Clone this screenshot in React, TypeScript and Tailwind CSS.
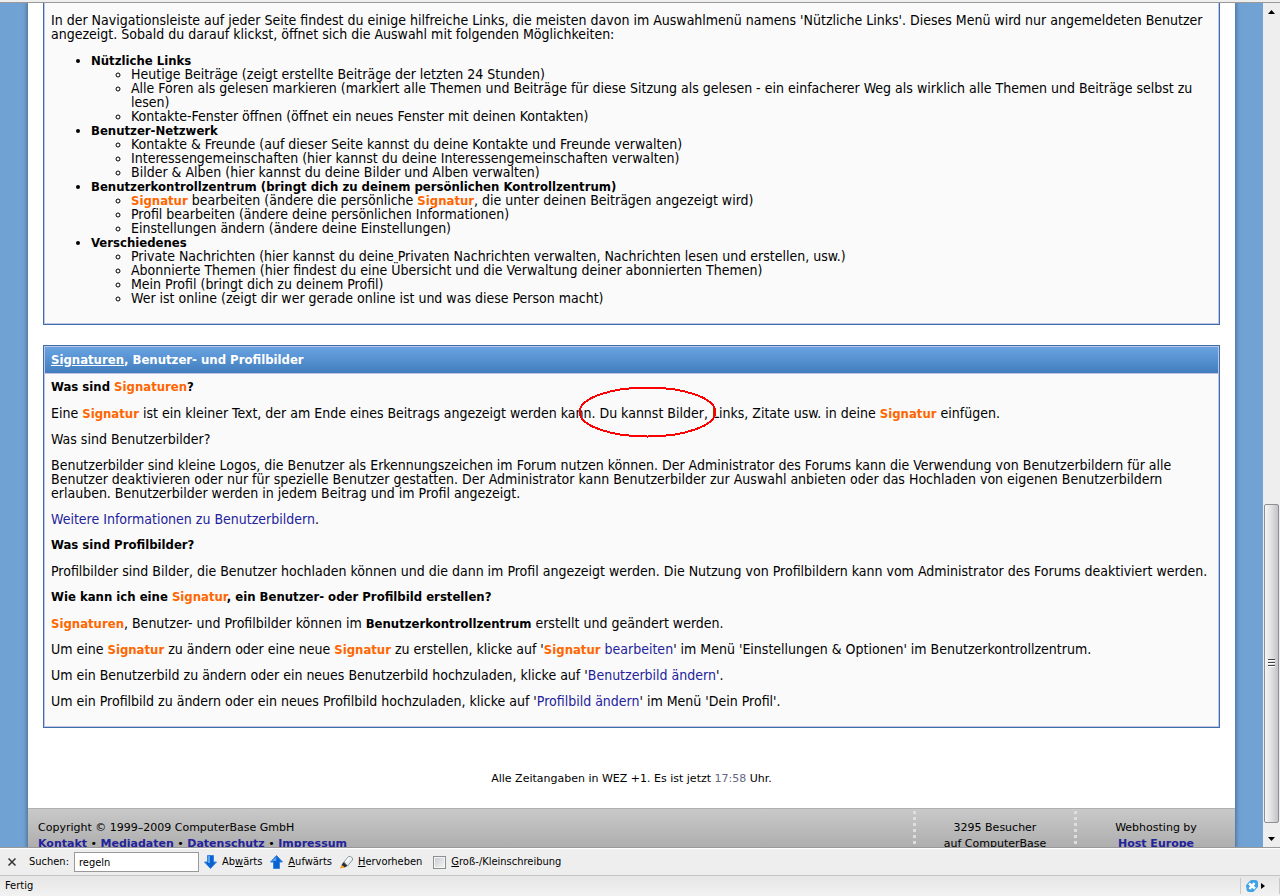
import React from 'react';

type Entry = { title: string; items: React.ReactNode[] };

const Strong = ({ children }: { children: React.ReactNode }) => (
  <strong className="text-[13px] leading-none">{children}</strong>
);

const Hit = ({ children }: { children: React.ReactNode }) => (
  <span className="text-[13px] leading-none font-bold text-[#ff6600]">{children}</span>
);

const Key = ({ children }: { children: React.ReactNode }) => <span className="underline">{children}</span>;

const Link = ({ children }: { children: React.ReactNode }) => (
  <a href="#" className="text-[#22229c]">
    {children}
  </a>
);

const navigation: Entry[] = [
  {
    title: 'Nützliche Links',
    items: [
      'Heutige Beiträge (zeigt erstellte Beiträge der letzten 24 Stunden)',
      'Alle Foren als gelesen markieren (markiert alle Themen und Beiträge für diese Sitzung als gelesen - ein einfacherer Weg als wirklich alle Themen und Beiträge selbst zu lesen)',
      'Kontakte-Fenster öffnen (öffnet ein neues Fenster mit deinen Kontakten)',
    ],
  },
  {
    title: 'Benutzer-Netzwerk',
    items: [
      'Kontakte & Freunde (auf dieser Seite kannst du deine Kontakte und Freunde verwalten)',
      'Interessengemeinschaften (hier kannst du deine Interessengemeinschaften verwalten)',
      'Bilder & Alben (hier kannst du deine Bilder und Alben verwalten)',
    ],
  },
  {
    title: 'Benutzerkontrollzentrum (bringt dich zu deinem persönlichen Kontrollzentrum)',
    items: [
      <>
        <Hit>Signatur</Hit> bearbeiten (ändere die persönliche <Hit>Signatur</Hit>, die unter deinen Beiträgen angezeigt
        wird)
      </>,
      'Profil bearbeiten (ändere deine persönlichen Informationen)',
      'Einstellungen ändern (ändere deine Einstellungen)',
    ],
  },
  {
    title: 'Verschiedenes',
    items: [
      'Private Nachrichten (hier kannst du deine Privaten Nachrichten verwalten, Nachrichten lesen und erstellen, usw.)',
      'Abonnierte Themen (hier findest du eine Übersicht und die Verwaltung deiner abonnierten Themen)',
      'Mein Profil (bringt dich zu deinem Profil)',
      'Wer ist online (zeigt dir wer gerade online ist und was diese Person macht)',
    ],
  },
];

function NavigationPanel() {
  return (
    <section className="border border-t-0 border-[#3b6eab]">
      <div className="flex flex-col gap-3 border border-t-0 border-[#c3c3e3] bg-[#fafafa] px-1.5 pt-2.5 pb-[18px]">
        <p>
          In der Navigationsleiste auf jeder Seite findest du einige hilfreiche Links, die meisten davon im Auswahlmenü
          namens 'Nützliche Links'. Dieses Menü wird nur angemeldeten Benutzer angezeigt. Sobald du darauf klickst,
          öffnet sich die Auswahl mit folgenden Möglichkeiten:
        </p>
        <ul className="list-disc pl-10">
          {navigation.map((entry) => (
            <li key={entry.title}>
              <Strong>{entry.title}</Strong>
              <ul className="list-[circle] pl-10">
                {entry.items.map((item, i) => (
                  <li key={i}>{item}</li>
                ))}
              </ul>
            </li>
          ))}
        </ul>
      </div>
    </section>
  );
}

function SignaturePanel() {
  return (
    <section className="mt-5 border border-[#3b6eab]">
      <div className="border border-[#c3c3e3] bg-[#fafafa]">
        <h2 className="border-b border-[#c3c3e3] bg-linear-to-b from-[#69a3e2] to-[#417dbd] px-1.5 py-1.5 text-[13px] font-bold text-white">
          <a href="#" className="underline">
            Signaturen
          </a>
          , Benutzer- und Profilbilder
        </h2>
        <div className="flex flex-col gap-3 px-1.5 pt-1.5 pb-[18px]">
          <p className="text-[13px] font-bold">
            Was sind <Hit>Signaturen</Hit>?
          </p>
          <p className="relative">
            Eine <Hit>Signatur</Hit> ist ein kleiner Text, der am Ende eines Beitrags angezeigt werden kann. Du kannst
            Bilder, Links, Zitate usw. in deine <Hit>Signatur</Hit> einfügen.
            <svg
              className="absolute -top-5 left-[527px] h-[52px] w-[139px]"
              viewBox="0 0 139 52"
              fill="none"
              shapeRendering="crispEdges"
            >
              <ellipse cx="69.5" cy="26" rx="68" ry="24.5" stroke="#f00" strokeWidth="2" />
            </svg>
          </p>
          <p>Was sind Benutzerbilder?</p>
          <p>
            Benutzerbilder sind kleine Logos, die Benutzer als Erkennungszeichen im Forum nutzen können. Der
            Administrator des Forums kann die Verwendung von Benutzerbildern für alle Benutzer deaktivieren oder nur für
            spezielle Benutzer gestatten. Der Administrator kann Benutzerbilder zur Auswahl anbieten oder das Hochladen
            von eigenen Benutzerbildern erlauben. Benutzerbilder werden in jedem Beitrag und im Profil angezeigt.
          </p>
          <p>
            <Link>Weitere Informationen zu Benutzerbildern</Link>.
          </p>
          <p className="text-[13px] font-bold">Was sind Profilbilder?</p>
          <p>
            Profilbilder sind Bilder, die Benutzer hochladen können und die dann im Profil angezeigt werden. Die Nutzung
            von Profilbildern kann vom Administrator des Forums deaktiviert werden.
          </p>
          <p className="text-[13px] font-bold">
            Wie kann ich eine <Hit>Signatur</Hit>, ein Benutzer- oder Profilbild erstellen?
          </p>
          <p>
            <Hit>Signaturen</Hit>, Benutzer- und Profilbilder können im <Strong>Benutzerkontrollzentrum</Strong> erstellt
            und geändert werden.
          </p>
          <p>
            Um eine <Hit>Signatur</Hit> zu ändern oder eine neue <Hit>Signatur</Hit> zu erstellen, klicke auf '
            <Link>
              <Hit>Signatur</Hit> bearbeiten
            </Link>
            ' im Menü 'Einstellungen & Optionen' im Benutzerkontrollzentrum.
          </p>
          <p>
            Um ein Benutzerbild zu ändern oder ein neues Benutzerbild hochzuladen, klicke auf '
            <Link>Benutzerbild ändern</Link>'.
          </p>
          <p>
            Um ein Profilbild zu ändern oder ein neues Profilbild hochzuladen, klicke auf '<Link>Profilbild ändern</Link>
            ' im Menü 'Dein Profil'.
          </p>
        </div>
      </div>
    </section>
  );
}

const Dots = () => (
  <div className="mt-0.5 h-[34px] w-[3px] shrink-0 bg-[repeating-linear-gradient(to_bottom,#dedede_0px,#dedede_3px,transparent_3px,transparent_6px)]" />
);

const footerLinks = ['Kontakt', 'Mediadaten', 'Datenschutz', 'Impressum'];

function Footer() {
  return (
    <footer className="flex h-20 border-t border-[#b0b0b0] bg-linear-to-b from-[#c9c9c9] to-[#929292] font-['DejaVu_Sans',Verdana,sans-serif] text-[11px] leading-4">
      <div className="grow pt-[11px] pl-2.5">
        Copyright © 1999–2009 ComputerBase GmbH
        <br />
        {footerLinks.map((label, i) => (
          <React.Fragment key={label}>
            {i > 0 && ' • '}
            <a href="#" className="font-bold text-[#22229c]">
              {label}
            </a>
          </React.Fragment>
        ))}
      </div>
      <Dots />
      <div className="w-[158px] pt-[11px] text-center">
        3295 Besucher
        <br />
        auf ComputerBase
      </div>
      <Dots />
      <div className="w-[158px] pt-[11px] text-center">
        Webhosting by
        <br />
        <a href="#" className="font-bold text-[#22229c]">
          Host Europe
        </a>
      </div>
    </footer>
  );
}

function Scrollbar() {
  return (
    <div className="flex w-[17px] shrink-0 flex-col items-center bg-[#eeeeee]">
      <button aria-label="Nach oben" className="flex h-[17px] w-full items-center justify-center">
        <svg width="7" height="4" viewBox="0 0 7 4">
          <path d="M3.5 0L7 4H0z" />
        </svg>
      </button>
      <div className="basis-[484px]" />
      <div className="flex w-[15px] grow items-center justify-center rounded-xs border border-[#8f8f8f] bg-linear-to-r from-[#f6f6f6] via-[#e0e0e2] to-[#c2c2c8]">
        <svg width="7" height="9" viewBox="0 0 7 9">
          <path d="M0 1h7M0 4h7M0 7h7" stroke="#fff" transform="translate(0 .5)" />
          <path d="M0 .5h7M0 3.500h7M0 6.500h7" stroke="#444" />
        </svg>
      </div>
      <button aria-label="Nach unten" className="mt-[7px] flex h-[17px] w-full items-center justify-center">
        <svg width="7" height="4" viewBox="0 0 7 4">
          <path d="M0 0h7L3.5 4z" />
        </svg>
      </button>
    </div>
  );
}

const ArrowDown = () => (
  <svg width="13" height="14" viewBox="0 0 13 14">
    <path d="M3.500.500h6v6.500h3L6.500 13.500.500 7h3z" fill="#0a62d0" stroke="#3583dd" />
    <path d="M5 1v7" stroke="#5aa3f0" strokeWidth="2" />
  </svg>
);

const ArrowUp = () => (
  <svg width="13" height="14" viewBox="0 0 13 14">
    <path d="M3.500 13.500h6V7h3L6.500.500.500 7h3z" fill="#0a62d0" stroke="#3583dd" />
    <path d="M6.500 1.500L2 6h4v2z" fill="#5aa3f0" />
  </svg>
);

const Marker = () => (
  <svg width="13" height="14" viewBox="0 0 13 14">
    <path d="M4 7L8.500 1.500h2l2 1.500v2L7.500 11z" fill="#e8eef0" stroke="#8b979d" />
    <path d="M9.500 2.500L6 7" stroke="#fff" strokeWidth="2" />
    <path d="M3.500 7l4 4-3 1.500L1.500 10z" fill="#2b2f33" />
    <path d="M0 13.500L1.500 10 5 12.500z" fill="#f5a01e" />
  </svg>
);

function FindBar() {
  return (
    <div className="flex h-[27px] items-center border-t border-white bg-[#eeeeee]">
      <button aria-label="Schließen" className="ml-2">
        <svg width="8" height="8" viewBox="0 0 8 8" stroke="#333" strokeWidth="1.5">
          <path d="M.5.500l7 7M7.500.500l-7 7" />
        </svg>
      </button>
      <label htmlFor="find" className="ml-[13px]">
        Suchen:
      </label>
      <input
        id="find"
        defaultValue="regeln"
        className="ml-[5px] h-5 w-[125px] border border-[#999999] bg-white px-1 outline-none"
      />
      <button className="ml-[5px] flex items-center gap-[5px]">
        <ArrowDown />
        <span>
          Ab<Key>w</Key>ärts
        </span>
      </button>
      <button className="ml-2 flex items-center gap-[5px]">
        <ArrowUp />
        <span>
          <Key>A</Key>ufwärts
        </span>
      </button>
      <button className="ml-2 flex items-center gap-[5px]">
        <Marker />
        <span>
          <Key>H</Key>ervorheben
        </span>
      </button>
      <label className="ml-[11px] flex items-center gap-[5px]">
        <input
          type="checkbox"
          className="size-[13px] appearance-none border border-[#8e8f8f] bg-linear-to-br from-[#c6cbd2] to-[#f6f6f6] shadow-[inset_0_0_0_1px_#f4f4f4]"
        />
        <span>
          <Key>G</Key>roß-/Kleinschreibung
        </span>
      </label>
    </div>
  );
}

function StatusBar() {
  return (
    <div className="flex h-[21px] items-center justify-between border-t border-[#c4c4c4] bg-linear-to-b from-[#e6e6e6] to-[#f2f2f2] pl-[5px]">
      <span>Fertig</span>
      <div className="flex h-4 items-center gap-0.5 border-x border-[#c8c8c8] pr-3.5 pl-1">
        <svg width="14" height="14" viewBox="0 0 14 14">
          <rect x="2" y="2" width="10" height="10" rx="3" transform="rotate(45 7 7)" fill="#3fa3e4" />
          <rect x="1.500" y="5" width="8" height="8" rx="3" fill="#3fa3e4" />
          <rect x="5" y="1" width="8" height="8" rx="3" fill="#3fa3e4" />
          <path d="M4 4.500l6 5M9.500 4l-5 6" stroke="#fff" strokeWidth="2.5" />
        </svg>
        <svg width="4" height="6" viewBox="0 0 4 6">
          <path d="M0 0l4 3-4 3z" />
        </svg>
      </div>
    </div>
  );
}

export default function App() {
  return (
    <div className="flex h-screen flex-col bg-[#eeeeee] font-['DejaVu_Sans_Condensed','DejaVu_Sans',Verdana,sans-serif] text-[14px] leading-[14px] text-black">
      <div className="h-[3px] shrink-0 border-b border-[#999999]" />
      <div className="flex min-h-0 grow border-b border-[#999999]">
        <div className="min-w-0 grow overflow-hidden bg-[#70a2d4] px-7">
          <main className="bg-white shadow-[0_0_4px_1px_#4a6a8c]">
            <div className="px-[15px]">
              <NavigationPanel />
              <SignaturePanel />
              <p className="mt-11 pb-[22px] text-center font-['DejaVu_Sans',Verdana,sans-serif] text-[11px]">
                Alle Zeitangaben in WEZ +1. Es ist jetzt <span className="text-[#666686]">17:58</span> Uhr.
              </p>
            </div>
            <Footer />
          </main>
        </div>
        <Scrollbar />
      </div>
      <div className="shrink-0 text-[11px]">
        <FindBar />
        <StatusBar />
      </div>
    </div>
  );
}
